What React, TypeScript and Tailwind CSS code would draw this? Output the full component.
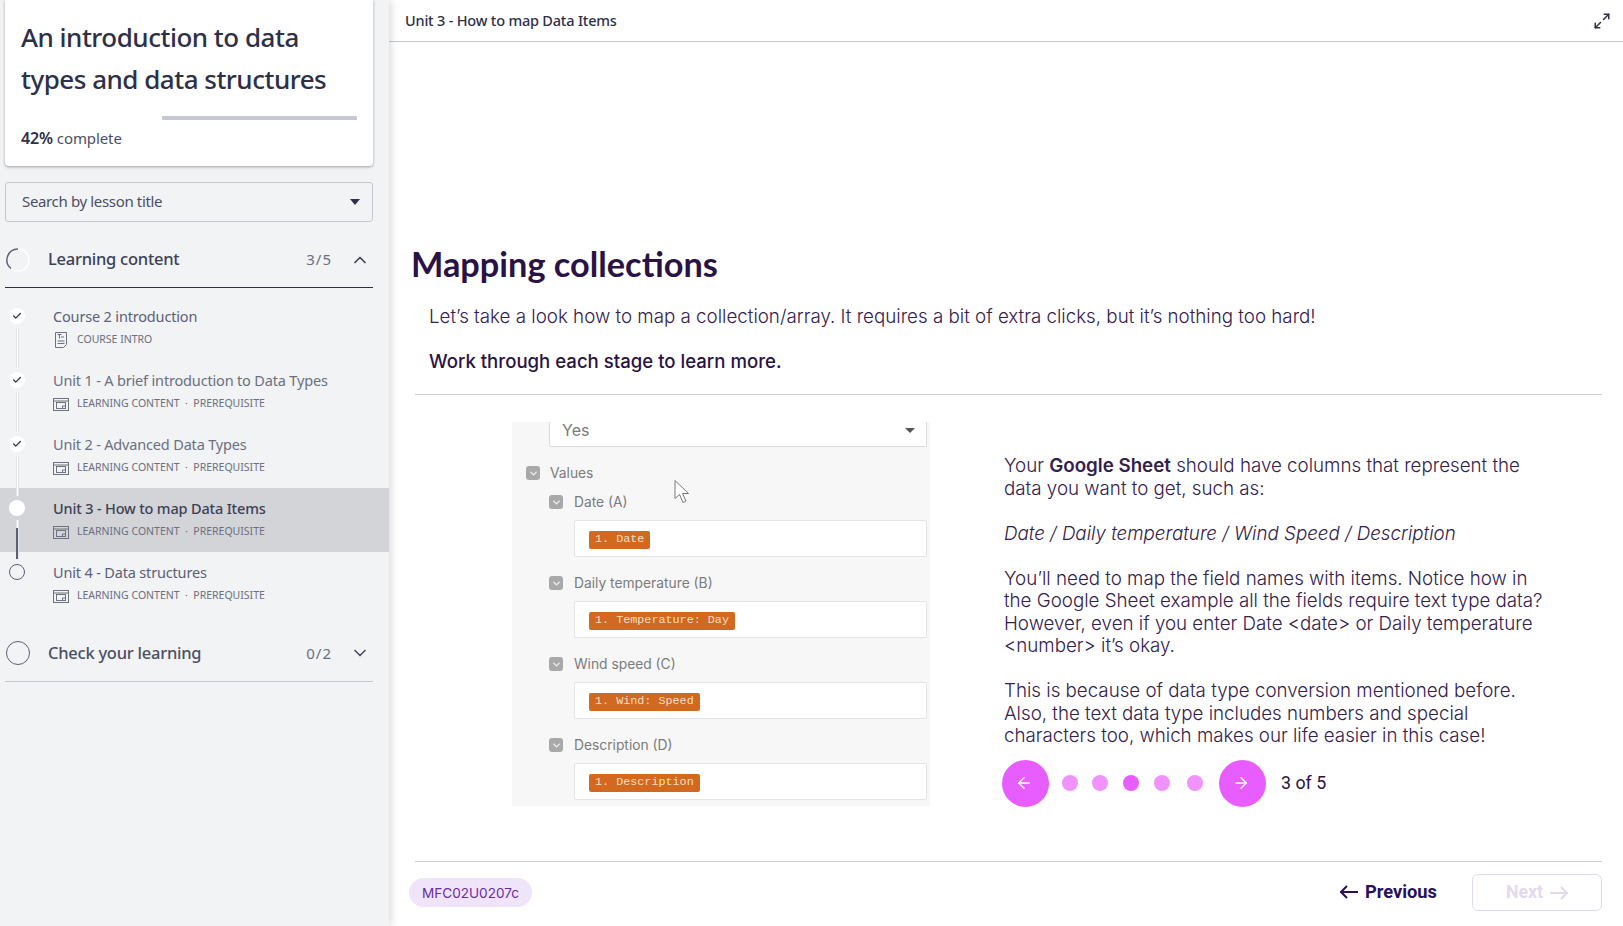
import { ArrowLeft, ArrowRight, ChevronDown, ChevronUp, Check, Maximize2 } from "lucide-react";

const side = { fontFamily: '"Noto Sans", "Open Sans", sans-serif' };
const body = { fontFamily: 'Inter, "Liberation Sans", sans-serif' };
const mono = { fontFamily: '"Liberation Mono", monospace' };

function SlideIcon() {
  return (
    <svg width="16" height="13" viewBox="0 0 16 13" fill="none" stroke="#6b7280" strokeWidth="1" className="shrink-0">
      <rect x="0.5" y="0.5" width="15" height="12" />
      <path d="M0.5 3h15" />
      <rect x="3.5" y="4.5" width="9" height="6" />
      <path d="M9.500 10.500v-2.500h3" />
    </svg>
  );
}

function DocIcon() {
  return (
    <svg width="14" height="16" viewBox="0 0 14 16" fill="none" stroke="#6b7280" strokeWidth="1" className="shrink-0">
      <path d="M1.500 0.500h11v12l-3 3h-8z" />
      <path d="M3.500 2.500h4M5.500 2.500v4M7 5h3M3.500 9h7M3.500 11.500h7" />
    </svg>
  );
}

function NavArrow({ right }: { right?: boolean }) {
  return (
    <svg width="19" height="14" viewBox="0 0 19 14" fill="none" stroke="currentColor" strokeWidth="2" className="shrink-0">
      <path d={right ? "M12 1l6 6-6 6M18 7H1" : "M7 1 1 7l6 6M1 7h17"} />
    </svg>
  );
}

function Lesson({ title, meta, state, doc }: { title: string; meta: string; state: "done" | "current" | "todo"; doc?: boolean }) {
  const current = state === "current";
  return (
    <div className={`relative h-[64px] pl-[53px] pt-[9px] ${current ? "bg-[#d3d4d8]" : ""}`}>
      <div className="absolute left-[9px] top-[12px] w-4 h-4 flex items-center justify-center rounded-full z-30">
        {state === "done" && (
          <span className="w-4 h-4 rounded-full bg-white flex items-center justify-center">
            <Check size={10} strokeWidth={3} color="#2d3047" />
          </span>
        )}
        {state === "current" && <span className="w-4 h-4 rounded-full bg-white" />}
        {state === "todo" && <span className="w-4 h-4 rounded-full border border-[#5c6075]" />}
      </div>
      {state !== "todo" && <div className="absolute left-[16px] top-[32px] w-[3px] h-[40px] bg-white border-x border-[#e2e3e7] z-10" />}
      {current && <div className="absolute left-[16px] top-[40px] w-[2px] h-[31px] bg-[#5c6075] z-20" />}
      <div className={`text-[14.5px] tracking-[-0.17px] leading-[22px] whitespace-nowrap ${current ? "text-[#3d4156] font-medium" : state === "todo" || title.startsWith("Course") ? "text-[#5c6075]" : "text-[#6b7080]"}`}>
        {title}
      </div>
      <div className="flex items-center gap-2 mt-[4px] h-[18px]">
        {doc ? <span className="w-[16px] flex justify-center"><DocIcon /></span> : <SlideIcon />}
        <span className="text-[10.5px] text-[#6b7080] whitespace-pre">{meta}</span>
      </div>
    </div>
  );
}

function Field({ label, tag }: { label: string; tag: string }) {
  return (
    <div>
      <div className="flex items-center gap-[11px] h-[20px] pl-[37px]">
        <span className="w-[14px] h-[14px] rounded-[3px] bg-[#a9a9a9] flex items-center justify-center">
          <ChevronDown size={11} strokeWidth={3} color="#f0f0f0" />
        </span>
        <span className="text-[13.8px] text-[#7b7b7b]">{label}</span>
      </div>
      <div className="ml-[62px] mr-[3px] mt-[8px] h-[37px] bg-white border border-[#e4e4e4] rounded-[2px] flex items-center pl-[14px]">
        <span className="mt-[2px] h-[18px] px-[6px] rounded-[2px] bg-[#d2691e] text-[#f6dfc9] text-[11.750px] flex items-center whitespace-pre" style={mono}>{tag}</span>
      </div>
    </div>
  );
}

export default function App() {
  return (
    <div className="flex h-[926px] w-[1623px] overflow-hidden bg-white" style={side}>
      <aside className="w-[389px] shrink-0 bg-[#f1f3f5] h-full flex flex-col shadow-[2px_0_8px_rgba(0,0,0,0.15)] z-10">
        <div className="mx-[5px] w-[368px] h-[166px] bg-white rounded-b-[4px] shadow-[0_1px_3px_rgba(0,0,0,0.35)] pl-[16px] pr-[16px] pt-[16px]">
          <h1 className="text-[26px] tracking-[-0.5px] leading-[42px] font-medium text-[#2d3047] whitespace-nowrap">An introduction to data<br />types and data structures</h1>
          <div className="mt-[16px] h-1 ml-[141px] bg-[#c5c8d2] rounded-[1px]" />
          <div className="mt-[6px] text-[15px] tracking-[-0.1px] text-[#4b4f63] leading-[24px]"><span className="font-semibold text-[#2d3047] text-[16px]">42%</span> complete</div>
        </div>
        <div className="mx-[5px] mt-[16px] w-[368px] h-[40px] border border-[#c5c8d2] rounded-[3px] flex items-center justify-between pl-[16px] pr-[12px]">
          <span className="text-[15px] tracking-[-0.35px] text-[#4b4f63] -mt-[2px]">Search by lesson title</span>
          <span className="w-0 h-0 border-l-[5px] border-r-[5px] border-t-[6px] border-l-transparent border-r-transparent border-t-[#2d3047]" />
        </div>
        <div className="mx-[5px] mt-[16px] w-[368px] h-[50px] flex items-center border-b border-[#2d3047] pb-[6px]">
          <svg width="24" height="24" viewBox="0 0 24 24" fill="none" className="shrink-0 ml-[1px]">
            <circle cx="12" cy="12" r="11" stroke="#ffffff" strokeWidth="1.500" />
            <path d="M12 1A11 11 0 0 0 5 20.500" stroke="#5c6075" strokeWidth="1.500" />
          </svg>
          <span className="ml-[18px] text-[16.500px] tracking-[-0.25px] font-medium text-[#3d4156]">Learning content</span>
          <span className="ml-auto text-[15px] text-[#6b7080] tracking-[1px]">3/5</span>
          <ChevronUp size={20} strokeWidth={2} color="#3d4156" className="ml-[18px] mr-[3px]" />
        </div>
        <div className="mt-[8px] w-[389px]">
          <Lesson title="Course 2 introduction" meta="COURSE INTRO" state="done" doc />
          <Lesson title="Unit 1 - A brief introduction to Data Types" meta="LEARNING CONTENT  ·  PREREQUISITE" state="done" />
          <Lesson title="Unit 2 - Advanced Data Types" meta="LEARNING CONTENT  ·  PREREQUISITE" state="done" />
          <Lesson title="Unit 3 - How to map Data Items" meta="LEARNING CONTENT  ·  PREREQUISITE" state="current" />
          <Lesson title="Unit 4 - Data structures" meta="LEARNING CONTENT  ·  PREREQUISITE" state="todo" />
        </div>
        <div className="mx-[5px] mt-[14px] w-[368px] h-[52px] flex items-center border-b border-[#c5c8d2] pb-[5px]">
          <span className="w-[24px] h-[24px] ml-[1px] rounded-full border-[1.5px] border-[#5c6075] shrink-0" />
          <span className="ml-[18px] text-[16.500px] tracking-[-0.25px] font-medium text-[#4b4f63]">Check your learning</span>
          <span className="ml-auto text-[15px] text-[#6b7080] tracking-[1px]">0/2</span>
          <ChevronDown size={20} strokeWidth={2} color="#4b4f63" className="ml-[18px] mr-[3px]" />
        </div>
      </aside>

      <main className="flex-1 min-w-0 flex flex-col h-full">
        <header className="h-[42px] shrink-0 border-b border-[#c5c8d2] flex items-center justify-between pl-[16px] pr-[12px]">
          <span className="text-[14.500px] tracking-[-0.2px] font-medium text-[#2d3047]">Unit 3 - How to map Data Items</span>
          <Maximize2 size={18} strokeWidth={2} color="#2d3047" />
        </header>

        <section className="flex-1 min-h-0 pt-[202px] pl-[22px] pr-[21px]" style={body}>
          <h2 className="text-[34.300px] leading-[40px] font-bold text-[#2a1245]" style={{ fontFamily: 'Lato, sans-serif' }}>Mapping collections</h2>
          <p className="mt-[18px] ml-[18px] text-[18.750px] leading-[30px] font-light text-[#33204d]">Let’s take a look how to map a collection/array. It requires a bit of extra clicks, but it’s nothing too hard!</p>
          <p className="mt-[14px] ml-[18px] text-[18.600px] leading-[30px] font-medium text-[#2a1245]">Work through each stage to learn more.</p>
          <div className="mt-[18px] ml-[4px] border-t border-[#d5cfd5]" />

          <div className="flex mt-[27px] ml-[101px]">
            <div className="relative w-[418px] h-[384px] bg-[#f7f7f7] shrink-0" style={{ fontFamily: 'Inter, sans-serif' }}>
              <div className="ml-[37px] mr-[3px] h-[25px] bg-white border-x border-b border-[#dcdcdc] rounded-b-[2px] flex items-start justify-between pl-[12px] pr-[11px]">
                <span className="text-[16px] leading-[16px] text-[#7b7b7b]">Yes</span>
                <span className="mt-[6px] w-0 h-0 border-l-[5px] border-r-[5px] border-t-[5px] border-l-transparent border-r-transparent border-t-[#555]" />
              </div>
              <div className="flex items-center gap-[10px] h-[20px] pl-[14px] mt-[16px]">
                <span className="w-[14px] h-[14px] rounded-[3px] bg-[#a9a9a9] flex items-center justify-center">
                  <ChevronDown size={11} strokeWidth={3} color="#f0f0f0" />
                </span>
                <span className="text-[13.800px] text-[#7b7b7b]">Values</span>
              </div>
              <div className="mt-[9px] flex flex-col gap-[16px]">
                <Field label="Date (A)" tag="1. Date" />
                <Field label="Daily temperature (B)" tag="1. Temperature: Day" />
                <Field label="Wind speed (C)" tag="1. Wind: Speed" />
                <Field label="Description (D)" tag="1. Description" />
              </div>
              <svg width="18" height="26" viewBox="0 0 18 25" className="absolute left-[162px] top-[57px]" fill="#fff" stroke="#777" strokeWidth="1">
                <path d="M1 1v18l4.500-4 3.500 8 3-1.500-3.500-7.500h6z" />
              </svg>
            </div>

            <div className="ml-[74px] w-[560px] text-[18.740px] leading-[22.500px] font-light text-[#33204d]">
              <div className="pt-[33px]">
                <p>Your <span className="font-semibold">Google Sheet</span> should have columns that represent the<br />data you want to get, such as:</p>
                <p className="mt-[22.500px] italic">Date / Daily temperature / Wind Speed / Description</p>
                <p className="mt-[22.500px]">You’ll need to map the field names with items. Notice how in<br />the Google Sheet example all the fields require text type data?<br />However, even if you enter Date &lt;date&gt; or Daily temperature<br />&lt;number&gt; it’s okay.</p>
                <p className="mt-[22.500px]">This is because of data type conversion mentioned before.<br />Also, the text data type includes numbers and special<br />characters too, which makes our life easier in this case!</p>
              </div>
              <div className="flex items-center mt-[12px] -ml-[2px]">
                <button className="w-[47px] h-[47px] rounded-full bg-[#e85dff] flex items-center justify-center pr-[3px]"><ArrowLeft size={18} color="#fff" strokeWidth={2} /></button>
                <span className="ml-[13px] w-[16px] h-[16px] rounded-full bg-[#f093ff]" />
                <span className="ml-[14px] w-[16px] h-[16px] rounded-full bg-[#f093ff]" />
                <span className="ml-[15px] w-[16px] h-[16px] rounded-full bg-[#e85dff]" />
                <span className="ml-[15px] w-[16px] h-[16px] rounded-full bg-[#f093ff]" />
                <span className="ml-[17px] w-[16px] h-[16px] rounded-full bg-[#f093ff]" />
                <button className="ml-[16px] w-[47px] h-[47px] rounded-full bg-[#e85dff] flex items-center justify-center pr-[3px]"><ArrowRight size={18} color="#fff" strokeWidth={2} /></button>
                <span className="ml-[15px] text-[17.800px] font-normal text-[#2a1245]" style={{ fontFamily: 'Roboto, sans-serif' }}>3 of 5</span>
              </div>
            </div>
          </div>
        </section>

        <footer className="shrink-0 mr-[21px] pl-[26px]">
          <div className="border-t border-[#d5cfd5]" />
          <div className="relative h-[64px] flex items-start pt-[12px] justify-end">
            <span className="absolute -left-[6px] top-[16px] pt-[1px] h-[29px] w-[123px] rounded-full bg-[#f0e4fb] text-[#6a2ca5] text-[13.600px] flex items-center justify-center" style={{ fontFamily: 'Inter, sans-serif' }}>MFC02U0207c</span>
            <button className="h-[36px] flex items-center gap-[6px] text-[18.300px] font-bold text-[#2a0f5c] mr-[35px]" style={{ fontFamily: 'Roboto, sans-serif' }}><NavArrow />Previous</button>
            <button className="w-[130px] h-[37px] rounded-[6px] border border-[#e3d9ec] text-[#e3d9ec] flex items-center justify-center gap-[6px] text-[17.800px] font-bold" style={{ fontFamily: 'Roboto, sans-serif' }}>Next<NavArrow right /></button>
          </div>
        </footer>
      </main>
    </div>
  );
}
